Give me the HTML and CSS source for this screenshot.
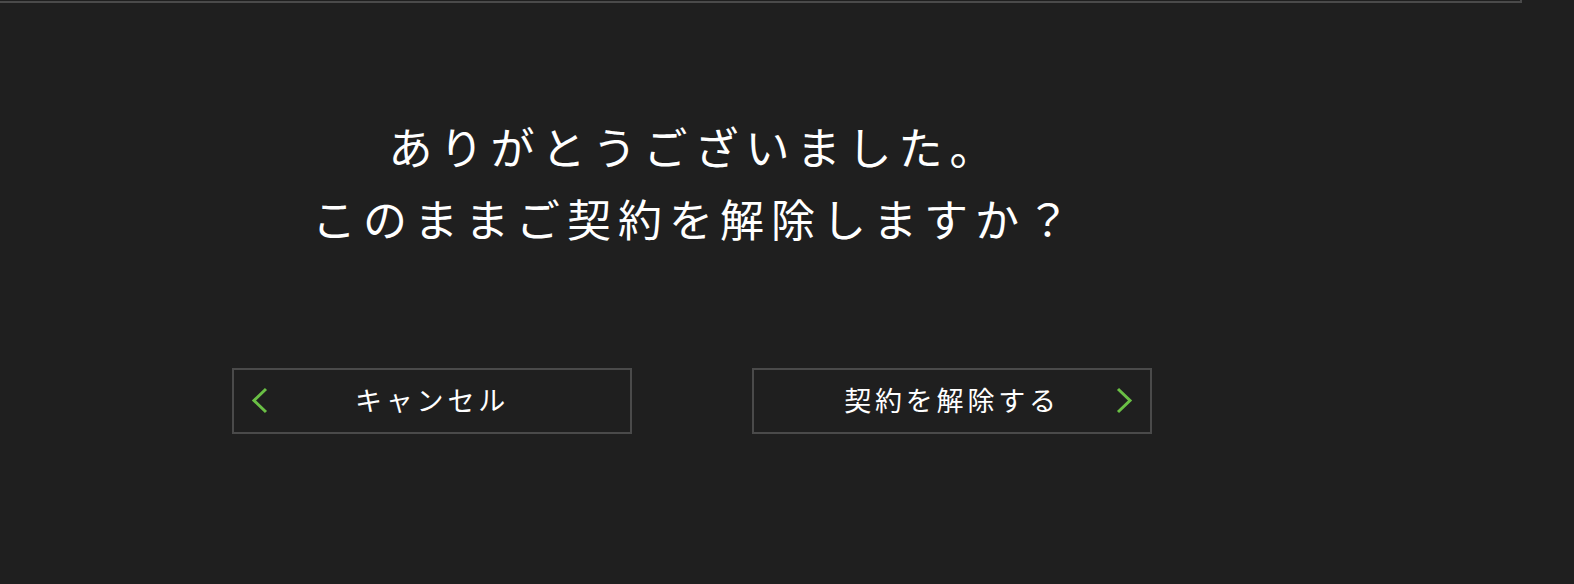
FILE: index.html
```html
<!DOCTYPE html>
<html lang="ja">
<head>
    <meta charset="UTF-8">
    <meta name="viewport" content="width=device-width, initial-scale=1.0">
    <title>解約の確認</title>
    <link rel="stylesheet" href="styles.css">
</head>
<body>
    <div class="topbar"></div>

    <div class="confirm">
        <!-- Message -->
        <h1 class="confirm-title">ありがとうございました。<br>このままご契約を解除しますか？</h1>

        <!-- Actions -->
        <div class="confirm-actions">
            <button class="action-btn" type="button">
                <svg class="chevron" viewBox="0 0 18 28" width="18" height="28">
                    <path d="M15 2 L3 13.5 L15 25"/>
                </svg>
                <span class="action-label">キャンセル</span>
                <span></span>
            </button>
            <button class="action-btn" type="button">
                <span></span>
                <span class="action-label">契約を解除する</span>
                <svg class="chevron" viewBox="0 0 18 28" width="18" height="28">
                    <path d="M3 2 L15 13.5 L3 25"/>
                </svg>
            </button>
        </div>
    </div>
</body>
</html>
```

FILE: styles.css
```css
body {
    margin: 0;
    background-color: #1f1f1f;
    color: #ffffff;
    font-family: "Noto Sans CJK JP", "Noto Sans", sans-serif;
}

.topbar {
    width: 1520px;
    height: 1px;
    border-bottom: 2px solid #4a4a4a;
    border-right: 2px solid #4a4a4a;
}

.confirm {
    width: 920px;
    margin-left: 232px;
}

.confirm-title {
    margin: 107px 0 0;
    padding-left: 5px;
    font-size: 44px;
    font-weight: 400;
    line-height: 72px;
    letter-spacing: 7px;
    text-align: center;
}

.confirm-actions {
    display: flex;
    gap: 120px;
    margin-top: 114px;
}

.action-btn {
    width: 400px;
    height: 66px;
    display: grid;
    grid-template-columns: 18px 1fr 18px;
    align-items: center;
    padding: 0 17px;
    background: transparent;
    border: 2px solid #4a4a4a;
    color: #ffffff;
    font-family: inherit;
    font-size: 27px;
    line-height: 36px;
    letter-spacing: 3.8px;
    cursor: pointer;
}

.action-label {
    text-align: center;
    padding-bottom: 2px;
}

.chevron {
    display: block;
}

.chevron path {
    fill: none;
    stroke: #6abf45;
    stroke-width: 3;
}
```
